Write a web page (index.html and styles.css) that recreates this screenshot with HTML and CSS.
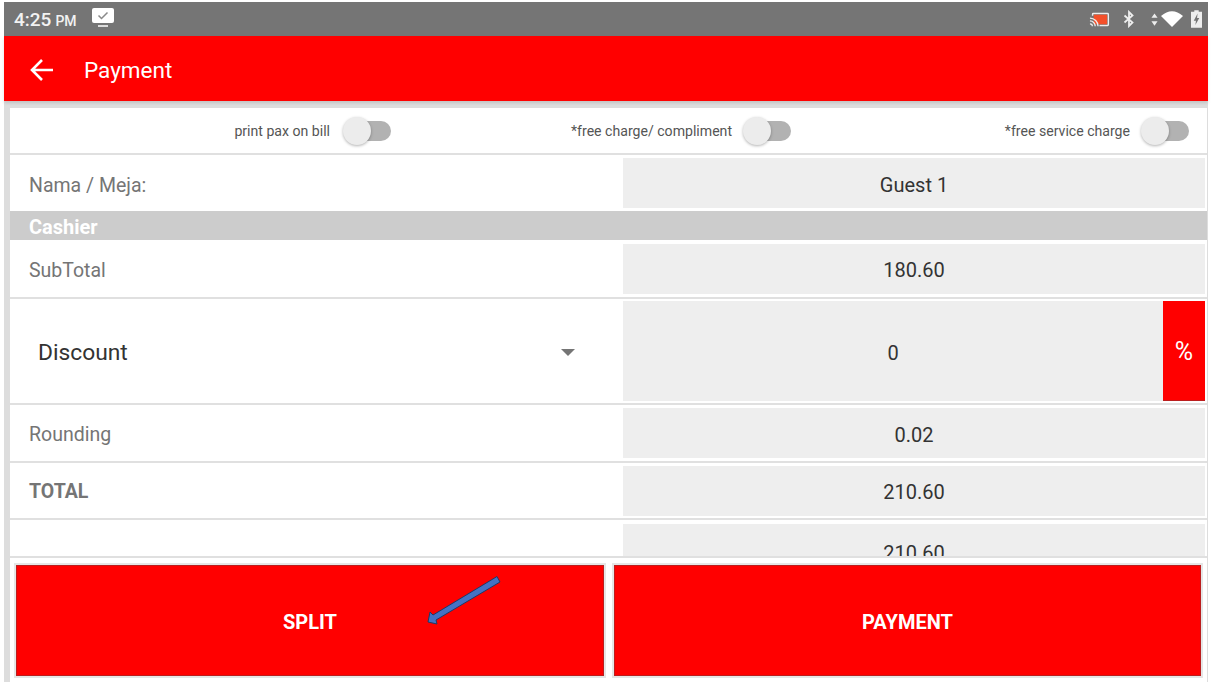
FILE: index.html
```html
<!DOCTYPE html>
<html lang="en">
<head>
    <meta charset="UTF-8">
    <meta name="viewport" content="width=device-width, initial-scale=1.0">
    <title>Payment</title>
    <link rel="stylesheet" href="styles.css">
</head>
<body>
    <div class="screen">
        <div class="status-bar">
            <span class="clock">4:25<small>PM</small></span>
            <svg class="status-monitor" width="24" height="20" viewBox="0 0 24 20">
                <rect x="1" y="0" width="22" height="15" rx="2" fill="#fff"/>
                <path d="M7.500 7.500l3 3 6-6" fill="none" stroke="#8a8a8a" stroke-width="1.500"/>
                <rect x="7" y="17" width="10" height="2" fill="#ddd"/>
            </svg>
            <div class="status-icons">
                <svg width="21" height="17" viewBox="0 0 22 16">
                    <path d="M3 4V2.500Q3 1 4.500 1h15Q21 1 21 2.500v11q0 1.500-1.500 1.500H11v-1.500h8.500v-11h-15V4z" fill="#eee"/>
                    <rect x="5" y="3" width="14" height="10" fill="#f4502a"/>
                    <path d="M1 6.500a8.500 8.500 0 0 1 8.500 8.500M1 9.500a5.500 5.500 0 0 1 5.500 5.500M1 12.500a2.500 2.500 0 0 1 2.500 2.500" fill="none" stroke="#eee" stroke-width="1.400"/>
                </svg>
                <svg class="status-bt" width="12" height="18" viewBox="0 0 12 16">
                    <path d="M1.500 4.500l8 7-3.500 3.500V1l3.500 3.500-8 7" fill="none" stroke="#eee" stroke-width="1.800"/>
                </svg>
                <svg class="status-data" width="7" height="17" viewBox="0 0 8 16">
                    <path d="M4 1l3.500 5h-7zM4 15L.5 10h7z" fill="#eee"/>
                </svg>
                <svg class="status-wifi" width="22" height="18" viewBox="0 0 22 16">
                    <path d="M0 5Q11-4.500 22 5L11 16z" fill="#fff"/>
                </svg>
                <svg class="status-battery" width="11" height="18" viewBox="0 0 10 16">
                    <path d="M3 0h4v1.500h3V16H0V1.500h3z" fill="#eee"/>
                    <path d="M6 3L2.500 9.500h2L4 13.500l3.500-6.500h-2z" fill="#757575"/>
                </svg>
            </div>
        </div>

        <header class="app-bar">
            <svg class="back" width="24" height="24" viewBox="0 0 24 24">
                <path d="M23 12H2M12 2L2 12l10 10" fill="none" stroke="#fff" stroke-width="2.600"/>
            </svg>
            <h1>Payment</h1>
        </header>

        <main class="card">
            <div class="options">
                <div class="option">print pax on bill <span class="switch"></span></div>
                <div class="option">*free charge/ compliment <span class="switch"></span></div>
                <div class="option">*free service charge <span class="switch"></span></div>
            </div>

            <div class="row row-name">
                <div class="label">Nama / Meja:</div>
                <div class="value">Guest 1</div>
            </div>

            <div class="section">Cashier</div>

            <div class="row row-sub">
                <div class="label">SubTotal</div>
                <div class="value">180.60</div>
            </div>

            <div class="row row-discount">
                <div class="discount-select">
                    <span>Discount</span>
                    <span class="caret"></span>
                </div>
                <div class="discount-value">
                    <div class="value">0</div>
                    <div class="percent">%</div>
                </div>
            </div>

            <div class="row row-round">
                <div class="label">Rounding</div>
                <div class="value">0.02</div>
            </div>

            <div class="row row-total">
                <div class="label label-strong">TOTAL</div>
                <div class="value">210.60</div>
            </div>

            <div class="row row-paid">
                <div class="label"></div>
                <div class="value">210.60</div>
            </div>

            <div class="actions">
                <button class="action action-split">SPLIT
                    <svg class="pointer" width="76" height="50" viewBox="0 0 76 50">
                        <path d="M2 46L4 36l3 3L71 .5l3 5.500L10 44l1 4z" fill="#4472c4" stroke="#1f3a66" stroke-width="1"/>
                    </svg>
                </button>
                <button class="action">PAYMENT</button>
            </div>
        </main>
    </div>
</body>
</html>
```

FILE: styles.css
```css
:root {
    --red: #ff0000;
    --field: #eeeeee;
    --line: #e0e0e0;
    --gray-text: #757575;
}

html,
body {
    margin: 0;
    padding: 0;
    height: 100%;
    background: #fff;
    overflow: hidden;
    font-family: 'Roboto', sans-serif;
}

.screen {
    height: 680px;
    margin: 2px 3px 0 4px;
    background-color: #dddddd;
    display: flex;
    flex-direction: column;
}

.status-bar {
    height: 34px;
    flex: none;
    background-color: #757575;
    color: #f2f2f2;
    display: flex;
    align-items: center;
    padding: 0 6px 0 10px;
}

.clock {
    font-size: 19px;
    font-weight: 500;
    margin-top: 1px;
}

.clock small {
    font-size: 14px;
    margin-left: 4px;
}

.status-monitor {
    margin-left: 14px;
    margin-top: -2px;
}

.status-icons {
    margin-left: auto;
    display: flex;
    align-items: center;
}

.status-bt {
    margin-left: 13px;
}

.status-data {
    margin-left: 16px;
}

.status-wifi {
    margin-left: 3px;
}

.status-battery {
    margin-left: 8px;
}

.app-bar {
    height: 65px;
    flex: none;
    background-color: var(--red);
    color: #fff;
    display: flex;
    align-items: center;
    padding-left: 26px;
    box-shadow: 0 2px 3px rgba(0, 0, 0, 0.12);
    position: relative;
}

.back {
    margin-top: 2px;
}

.app-bar h1 {
    margin: 3px 0 0 30px;
    font-size: 22.500px;
    font-weight: 400;
}

.card {
    flex: 1;
    min-height: 0;
    margin: 7px 1px 0 6px;
    background-color: #fff;
    display: flex;
    flex-direction: column;
}

.options {
    height: 45px;
    flex: none;
    display: grid;
    grid-template-columns: 381px 400px 398px;
    border-bottom: 2px solid var(--line);
    font-size: 14.100px;
    color: #555;
}

.option {
    display: flex;
    align-items: center;
    justify-content: flex-end;
    gap: 11px;
}

.option:first-child {
    gap: 13px;
}

.switch {
    width: 48px;
    height: 28px;
    position: relative;
    display: block;
}

.switch::before {
    content: "";
    position: absolute;
    left: 12px;
    top: 4px;
    width: 36px;
    height: 20px;
    border-radius: 10px;
    background-color: #b2b2b2;
}

.switch::after {
    content: "";
    position: absolute;
    left: 0;
    top: 0;
    width: 28px;
    height: 28px;
    border-radius: 50%;
    background-color: #ececec;
    box-shadow: 0 1px 3px rgba(0, 0, 0, 0.3);
}

.row {
    flex: none;
    display: grid;
    grid-template-columns: 613px 582px;
    align-items: center;
    border-bottom: 2px solid var(--line);
    box-sizing: border-box;
    font-size: 20px;
}

.row-name {
    height: 56px;
    border-bottom: none;
}

.row-sub {
    height: 59px;
}

.row-discount {
    height: 106px;
}

.row-round {
    height: 58px;
}

.row-total {
    height: 57px;
}

.row-paid {
    height: 38px;
    overflow: hidden;
    align-items: start;
    padding-top: 4px;
}

.label {
    color: var(--gray-text);
    font-size: 19.500px;
    padding-left: 19px;
}

.row-name .label,
.row-sub .label {
    padding-top: 4px;
}

.row-round .label,
.row-total .label {
    padding-top: 2px;
}

.label-strong {
    font-weight: 700;
}

.value {
    height: 50px;
    box-sizing: border-box;
    background-color: var(--field);
    color: #333;
    display: flex;
    align-items: center;
    justify-content: center;
    padding-top: 3px;
}

.row-paid .value {
    height: 58px;
    padding-top: 0;
}

.section {
    height: 29px;
    flex: none;
    background-color: #cccccc;
    color: #fff;
    font-size: 20px;
    font-weight: 700;
    line-height: 32px;
    padding-left: 19px;
}

.discount-select {
    display: flex;
    align-items: center;
    justify-content: space-between;
    padding: 2px 48px 0 28px;
    font-size: 22.800px;
    color: #333;
}

.caret {
    width: 0;
    height: 0;
    border-left: 7px solid transparent;
    border-right: 7px solid transparent;
    border-top: 7px solid var(--gray-text);
}

.discount-value {
    display: flex;
    height: 100px;
}

.discount-value .value {
    flex: 1;
    height: 100%;
}

.percent {
    width: 42px;
    background-color: var(--red);
    color: #fff;
    font-size: 25px;
    display: flex;
    align-items: center;
    justify-content: center;
    box-shadow: inset 0 -1px 0 rgba(120, 60, 60, 0.5);
}

.actions {
    flex: 1;
    min-height: 0;
    display: grid;
    grid-template-columns: 588px 587px;
    gap: 10px;
    padding: 7px 0 6px 6px;
}

.action {
    border: none;
    background-color: var(--red);
    color: #fff;
    font-family: inherit;
    font-size: 20px;
    font-weight: 700;
    box-shadow: inset 0 0 0 1px rgba(120, 60, 60, 0.5), 0 0 0 2px #e6e6e6;
    padding: 2px 0 0;
}

.action-split {
    position: relative;
}

.pointer {
    position: absolute;
    left: 410px;
    top: 11px;
}
```
